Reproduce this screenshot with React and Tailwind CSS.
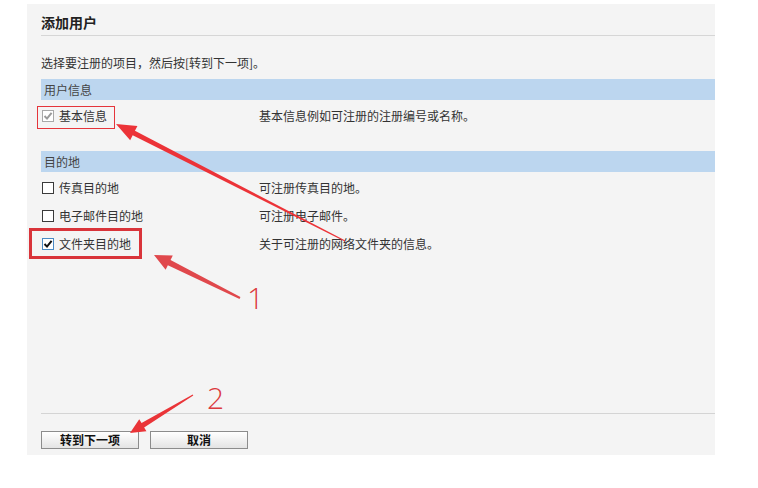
import React from 'react';

const font = { fontFamily: '"Noto Sans CJK SC", "Liberation Sans", sans-serif' };

// tapered arrow shape, thin at the tail and wide at the head
const arrowPoints = (x1, y1, x2, y2, headLen, headHalf, w1, w2) => {
  const dx = x2 - x1;
  const dy = y2 - y1;
  const len = Math.hypot(dx, dy);
  const ux = dx / len;
  const uy = dy / len;
  const nx = -uy;
  const ny = ux;
  const bx = x2 - ux * headLen;
  const by = y2 - uy * headLen;
  const pts = [
    [x1 + (nx * w1) / 2, y1 + (ny * w1) / 2],
    [bx + (nx * w2) / 2, by + (ny * w2) / 2],
    [bx + nx * headHalf, by + ny * headHalf],
    [x2, y2],
    [bx - nx * headHalf, by - ny * headHalf],
    [bx - (nx * w2) / 2, by - (ny * w2) / 2],
    [x1 - (nx * w1) / 2, y1 - (ny * w1) / 2],
  ];
  return pts.map((p) => p.join(',')).join(' ');
};

const Checkbox = ({ checked, disabled, accent }) => {
  const border = disabled ? 'border-[#a8a8a8]' : accent ? 'border-[#4a8ac4]' : 'border-[#3a3a3a]';
  return (
    <span className={`w-[12px] h-[12px] border ${border} bg-white flex items-center justify-center shrink-0`}>
      {checked && (
        <svg width="10" height="10" viewBox="0 0 10 10">
          <path
            d="M1.5 5 L4 7.6 L8.6 1.8"
            fill="none"
            stroke={disabled ? '#9a9a9a' : '#111'}
            strokeWidth="2"
          />
        </svg>
      )}
    </span>
  );
};

const Row = ({ label, desc, checked, disabled, accent }) => (
  <div className="h-[28px] flex items-center text-[12px] text-[#333]">
    <div className="w-[218px] flex items-center gap-[5px] pl-[1px]">
      <Checkbox checked={checked} disabled={disabled} accent={accent} />
      <span>{label}</span>
    </div>
    <span>{desc}</span>
  </div>
);

const SectionBar = ({ title }) => (
  <div className="h-[21px] bg-[#bcd6ef] flex items-center pl-[3px] text-[12px] text-[#444]">{title}</div>
);

const Button = ({ children }) => (
  <button className="w-[98px] h-[18px] border border-[#8c8c8c] bg-gradient-to-b from-white to-[#e4e4e4] text-[12px] font-bold text-[#111] leading-none flex items-center justify-center">
    {children}
  </button>
);

export default function App() {
  return (
    <div className="relative w-[758px] h-[488px] bg-white overflow-hidden" style={font}>
      <div className="ml-[27px] mt-[4px] w-[688px] h-[451px] bg-[#f4f4f4] flex flex-col pl-[14px]">
        <div className="pt-[8px] pb-[3px] border-b border-[#d6d6d6]">
          <h1 className="text-[14px] leading-[20px] font-bold text-[#222]">添加用户</h1>
        </div>
        <p className="mt-[19px] text-[12px] leading-[16px] text-[#333]">选择要注册的项目，然后按[转到下一项]。</p>

        <div className="mt-[8px]">
          <SectionBar title="用户信息" />
        </div>
        <div className="mt-[2px]">
          <Row label="基本信息" desc="基本信息例如可注册的注册编号或名称。" checked disabled />
        </div>

        <div className="mt-[21px]">
          <SectionBar title="目的地" />
        </div>
        <div className="mt-[2px]">
          <Row label="传真目的地" desc="可注册传真目的地。" />
          <Row label="电子邮件目的地" desc="可注册电子邮件。" />
          <Row label="文件夹目的地" desc="关于可注册的网络文件夹的信息。" checked accent />
        </div>

        <div className="flex-1" />
        <div className="border-t border-[#d4d4d4]" />
        <div className="mt-[17px] mb-[6px] flex gap-[11px]">
          <Button>转到下一项</Button>
          <Button>取消</Button>
        </div>
      </div>

      {/* annotations drawn on top of the screenshot */}
      <div className="absolute left-[37px] top-[106px] w-[78px] h-[23px] border-[1.5px] border-[#e5353b]" />
      <div className="absolute left-[29px] top-[228px] w-[113px] h-[31px] border-[3px] border-[#d9343a]" />
      <svg className="absolute left-0 top-0 pointer-events-none" width="758" height="488">
        <polygon points={arrowPoints(345, 241, 116, 124, 20, 8, 1, 5)} fill="#ec3338" />
        <polygon points={arrowPoints(240, 298, 154, 255, 17, 8, 2, 6)} fill="#e0484c" />
        <polygon points={arrowPoints(193, 395, 130, 433, 15, 7, 1, 5)} fill="#ea3438" />
      </svg>
      <div
        className="absolute left-[247px] top-[283px] text-[30px] leading-none text-[#dc3a3e] font-light"
        style={{ fontFamily: '"Open Sans", "Liberation Sans", sans-serif' }}
      >
        1
      </div>
      <div
        className="absolute left-[207px] top-[383px] text-[30px] leading-none text-[#dc3a3e] font-light"
        style={{ fontFamily: '"Open Sans", "Liberation Sans", sans-serif' }}
      >
        2
      </div>
    </div>
  );
}
